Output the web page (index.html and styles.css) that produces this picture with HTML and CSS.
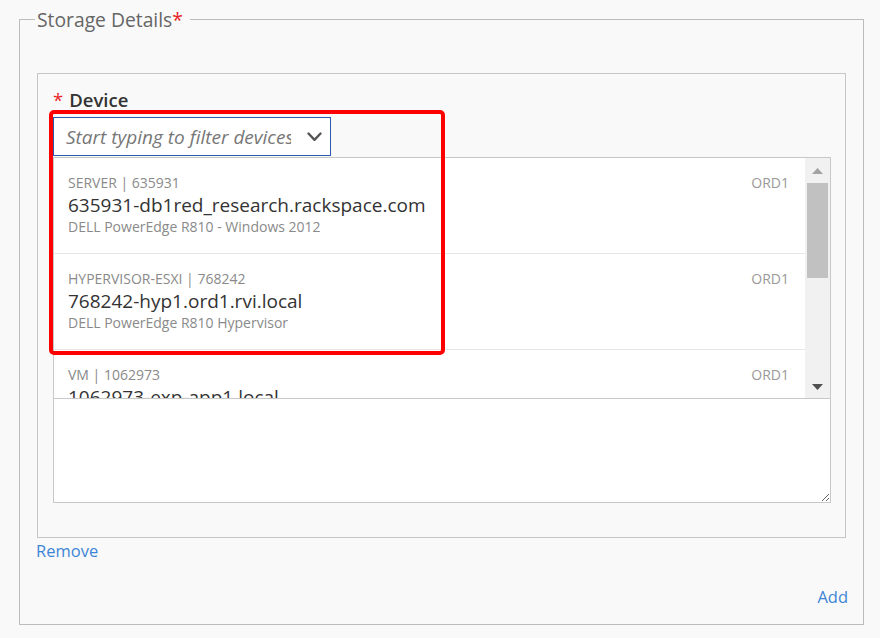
FILE: index.html
```html
<!DOCTYPE html>
<html lang="en">
<head>
<meta charset="utf-8">
<title>Storage Details</title>
<link rel="stylesheet" href="styles.css">
</head>
<body>
<fieldset class="storage">
  <legend class="storage-legend">Storage Details<span class="req">*</span></legend>
  <div class="device-box">
    <label class="field-label" for="device-filter"><span class="req-label">*</span>Device</label>
    <div class="combo">
      <input id="device-filter" class="combo-input" type="text" placeholder="Start typing to filter devices">
      <svg class="chevron" width="15" height="10" viewBox="0 0 15 10" aria-hidden="true"><path d="M1.5 1.5 L7.5 7.8 L13.5 1.5" fill="none" stroke="#555" stroke-width="2.4" stroke-linecap="round" stroke-linejoin="round"/></svg>
    </div>
    <div class="dropdown">
      <ul class="options">
        <li class="option">
          <div class="opt-main">
            <div class="opt-type">SERVER | 635931</div>
            <div class="opt-name">635931-db1red_research.rackspace.com</div>
            <div class="opt-desc">DELL PowerEdge R810 - Windows 2012</div>
          </div>
          <div class="opt-dc">ORD1</div>
        </li>
        <li class="option">
          <div class="opt-main">
            <div class="opt-type">HYPERVISOR-ESXI | 768242</div>
            <div class="opt-name">768242-hyp1.ord1.rvi.local</div>
            <div class="opt-desc">DELL PowerEdge R810 Hypervisor</div>
          </div>
          <div class="opt-dc">ORD1</div>
        </li>
        <li class="option">
          <div class="opt-main">
            <div class="opt-type">VM | 1062973</div>
            <div class="opt-name">1062973-exp-app1.local</div>
            <div class="opt-desc">VMware Virtual Machine</div>
          </div>
          <div class="opt-dc">ORD1</div>
        </li>
      </ul>
      <div class="scrollbar">
        <div class="sb-btn"><svg width="11" height="6" viewBox="0 0 11 6"><path d="M0 6 L5.5 0 L11 6 Z" fill="#a3a3a3"/></svg></div>
        <div class="sb-thumb"></div>
        <div class="sb-space"></div>
        <div class="sb-btn sb-down"><svg width="11" height="6" viewBox="0 0 11 6"><path d="M0 0 L11 0 L5.5 6 Z" fill="#505050"/></svg></div>
      </div>
    </div>
    <textarea class="notes"></textarea>
    <div class="highlight"></div>
  </div>
  <a class="link remove" href="#">Remove</a>
  <div class="add-row"><a class="link" href="#">Add</a></div>
</fieldset>
</body>
</html>
```
FILE: styles.css
```css
* { box-sizing: border-box; }
html, body { margin: 0; }
body {
  background: #f9f9f9;
  font-family: "Open Sans", "Liberation Sans", sans-serif;
  padding-top: 6px;
  color: #333;
}
.storage {
  margin: 0 16px 0 19px;
  border: 1px solid #bdbdbd;
  padding: 0 17px 16px 17px;
  min-width: 0;
}
.storage-legend {
  font-size: 19.3px;
  line-height: 27px;
  color: #666;
  padding: 0 7px 0 2px;
  margin-left: -2px;
}
.req { color: #e8231f; }
.device-box {
  position: relative;
  margin-top: 40px;
  border: 1px solid #c6c6c6;
  padding: 14px 14px 34px 15px;
}
.field-label {
  display: block;
  font-size: 18.5px;
  line-height: 24px;
  font-weight: 600;
  color: #333;
  margin-bottom: 5px;
}
.req-label {
  color: #e8231f;
  font-weight: 400;
  margin-right: 6px;
}
.combo {
  display: flex;
  align-items: center;
  width: 278px;
  height: 39px;
  border: 1px solid #2a5cad;
  background: #fff;
  padding: 0 8px 0 12px;
}
.combo-input {
  flex: 1;
  min-width: 0;
  border: none;
  outline: none;
  background: transparent;
  padding: 0;
  margin-right: 16px;
  font-family: "Open Sans", "Liberation Sans", sans-serif;
  font-size: 19px;
  font-style: italic;
  color: #333;
}
.combo-input::placeholder { color: #777; font-style: italic; }
.chevron { flex: none; display: block; }
.dropdown {
  margin-top: 1px;
  height: 242px;
  border: 1px solid #c8c8c8;
  background: #fff;
  display: flex;
  overflow: hidden;
}
.options {
  list-style: none;
  margin: 0;
  padding: 0;
  flex: 1;
  overflow: hidden;
}
.option {
  display: flex;
  justify-content: space-between;
  align-items: flex-start;
  padding: 15px 16px 16px 14px;
  border-bottom: 1px solid #e6e6e6;
}
.opt-type, .opt-desc, .opt-dc {
  font-size: 14px;
  line-height: 20px;
  color: #8a8a8a;
}
.opt-dc { color: #999; }
.opt-name {
  font-size: 19px;
  line-height: 24px;
  color: #333;
}
.scrollbar {
  flex: none;
  width: 25px;
  background: #f1f1f1;
  display: flex;
  flex-direction: column;
  align-items: center;
}
.sb-btn {
  height: 25px;
  width: 100%;
  display: flex;
  align-items: center;
  justify-content: center;
}
.sb-btn svg { display: block; }
.sb-down { padding-top: 2px; }
.sb-thumb {
  width: 21px;
  height: 95px;
  background: #c1c1c1;
}
.sb-space { flex: 1; }
.notes {
  display: block;
  width: 100%;
  height: 105px;
  margin: -1px 0 0 0;
  border: 1px solid #c8c8c8;
  background: #fff;
  resize: both;
  font-family: "Open Sans", "Liberation Sans", sans-serif;
}
.highlight {
  position: absolute;
  left: 11px;
  top: 36px;
  width: 396px;
  height: 245px;
  border: 4px solid #f00;
  border-radius: 5px;
  pointer-events: none;
}
.link {
  font-size: 16.5px;
  line-height: 22px;
  color: #3d85d6;
  text-decoration: none;
}
.remove {
  display: block;
  width: max-content;
  margin: 2px 0 0 -1px;
}
.add-row {
  margin: 24px -2px 0 0;
  text-align: right;
  line-height: 22px;
}
```
